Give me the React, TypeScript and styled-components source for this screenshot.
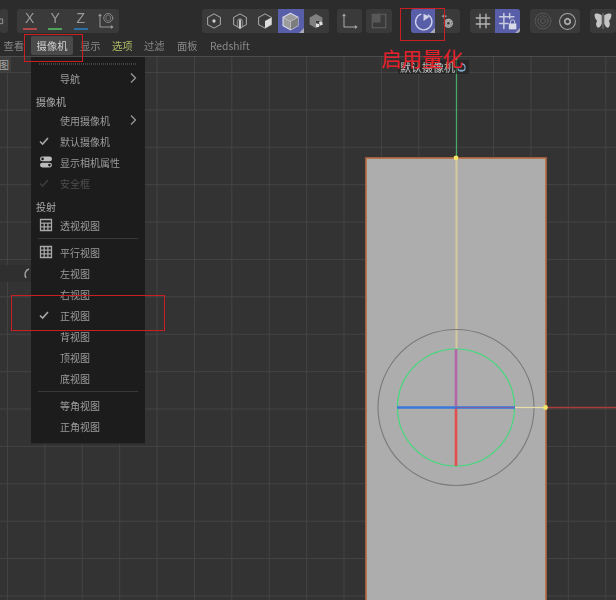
import React from 'react';
import styled, { createGlobalStyle } from 'styled-components';

const FONT = `"Noto Sans CJK SC", "Noto Sans", "Liberation Sans", sans-serif`;

const GlobalStyle = createGlobalStyle`
  html, body {
    margin: 0;
    padding: 0;
    background: #333;
    font-family: ${FONT};
  }
`;

const Page = styled.div`
  position: relative;
  width: 616px;
  height: 600px;
  overflow: hidden;
  display: flex;
  flex-direction: column;
`;

/* top toolbar */
const Toolbar = styled.div`
  height: 34px;
  flex: none;
  box-sizing: border-box;
  padding-top: 9px;
  background: #2c2c2c;
  display: flex;
  align-items: flex-start;
  filter: blur(0.3px);
`;

const ToolGroup = styled.div<{ $gap?: number }>`
  margin-left: ${(p) => p.$gap ?? 0}px;
  height: 24px;
  flex: none;
  display: flex;
  background: #3a3a3a;
  border-radius: 3px;
  overflow: hidden;
`;

const Tool = styled.div<{ $on?: boolean; $w?: number }>`
  position: relative;
  width: ${(p) => p.$w ?? 25}px;
  height: 24px;
  display: flex;
  align-items: center;
  justify-content: center;
  background: ${(p) => (p.$on ? '#585fa8' : 'transparent')};

  ${(p) =>
    p.$on &&
    `&::after {
      content: '';
      position: absolute;
      right: 0;
      bottom: 0;
      border-style: solid;
      border-width: 0 0 5px 5px;
      border-color: transparent transparent #a8a8b8 transparent;
    }`}
`;

const AxisTool = styled.div<{ $color: string }>`
  width: 25.5px;
  height: 24px;
  box-sizing: border-box;
  display: flex;
  flex-direction: column;
  align-items: center;
  color: #9a9a9a;
  font: 14px/19px "Liberation Sans", sans-serif;

  &::after {
    content: '';
    width: 14px;
    height: 2px;
    background: ${(p) => p.$color};
  }
`;

const Ico = styled.svg`
  width: 18px;
  height: 18px;
  fill: none;
  stroke: #a8a8a8;
  stroke-width: 1.4;
  stroke-linejoin: round;
  stroke-linecap: round;
`;

/* menu bar */
const MenuBar = styled.div`
  height: 21px;
  flex: none;
  padding: 0 0 1px 3.5px;
  background: #2c2c2c;
  border-bottom: 1px solid #4c4c4c;
  box-sizing: content-box;
  display: flex;
  align-items: stretch;
  font-size: 10.3px;
  filter: blur(0.3px);
`;

const MenuTitle = styled.div<{ $active?: boolean; $tint?: boolean; $gap?: number }>`
  margin-left: ${(p) => p.$gap ?? 0}px;
  padding: 0 6px;
  margin-top: 2px;
  display: flex;
  align-items: center;
  color: ${(p) => (p.$active ? '#d2d2d2' : p.$tint ? '#b0bb66' : '#8a8a8a')};
  background: ${(p) => (p.$active ? '#4a4a4a' : 'transparent')};
  border-radius: 2px;
`;

const PlainTitle = styled(MenuTitle)`
  padding: 0;
`;

/* viewport */
const Viewport = styled.div`
  position: relative;
  flex: 1;
  background-color: #333333;
  background-image:
    linear-gradient(to right, #434343 1px, transparent 1px),
    linear-gradient(to bottom, #434343 1px, transparent 1px);
  background-size: 37.4px 37.4px;
  background-position: 7px 15px;
`;

const Scene = styled.svg`
  position: absolute;
  inset: 0;
  width: 616px;
  height: 543px;
`;

const PanelTab = styled.div`
  position: absolute;
  left: 0;
  top: 0;
  width: 11px;
  height: 15px;
  background: #3e3e3e;
  color: #a8a8a8;
  font-size: 10px;
  line-height: 15px;
  overflow: hidden;
  text-indent: -1px;
`;

const PanelRow = styled.div`
  position: absolute;
  left: 0;
  top: 208px;
  width: 31px;
  height: 17px;
  background: #2f2f2f;
  display: flex;
  align-items: center;
  justify-content: flex-end;
`;

const CameraLabel = styled.div`
  position: absolute;
  left: 398px;
  top: 3px;
  height: 14px;
  padding: 0 2px;
  display: flex;
  align-items: center;
  gap: 1px;
  background: rgba(30, 30, 30, 0.55);
  color: #c6c6c6;
  font-size: 11px;
  line-height: 14px;
  white-space: nowrap;
  filter: blur(0.4px);
`;

/* camera dropdown */
const Dropdown = styled.div`
  position: absolute;
  left: 31px;
  top: 0;
  width: 114px;
  box-sizing: border-box;
  padding: 6px 0 6px;
  background: #1c1c1c;
  border-bottom: 1px solid #2a2a2a;
  font-size: 10px;
  color: #9c9c9c;
  filter: blur(0.3px);
`;

const Grip = styled.div`
  height: 2px;
  margin: 0 8px 2.5px;
  background-image: repeating-linear-gradient(to right, #424242 0 1px, transparent 1px 2px);
`;

const Row = styled.div<{ $off?: boolean }>`
  height: 21px;
  display: grid;
  grid-template-columns: 29px 1fr 18px;
  align-items: center;
  color: ${(p) => (p.$off ? '#505050' : '#9c9c9c')};
`;

const Slot = styled.div`
  padding-left: 8px;
  display: flex;
  align-items: center;
`;

const Header = styled.div`
  height: 21px;
  box-sizing: border-box;
  padding: 4px 0 0 5px;
  line-height: 17px;
  color: #acacac;
`;

const Divider = styled.div`
  height: 6px;
  box-sizing: border-box;
  margin: 0 7px;
  padding-top: 2px;

  &::before {
    content: '';
    display: block;
    height: 1px;
    background: #383838;
  }
`;

const MiniIcon = styled.svg`
  width: 14px;
  height: 14px;
  fill: none;
  stroke: #a8a8a8;
  stroke-width: 1.3;
  display: block;
`;

/* annotations laid over the screenshot */
const Mark = styled.div<{ $l: number; $t: number; $w: number; $h: number }>`
  position: absolute;
  left: ${(p) => p.$l}px;
  top: ${(p) => p.$t}px;
  width: ${(p) => p.$w}px;
  height: ${(p) => p.$h}px;
  box-sizing: border-box;
  border: 1px solid #c81e24;
  pointer-events: none;
`;

const MarkText = styled.div`
  position: absolute;
  left: 381px;
  top: 44px;
  color: #e3222c;
  font-size: 20.5px;
  font-weight: 400;
  line-height: 28px;
  white-space: nowrap;
`;

const Check = ({ dim }: { dim?: boolean }) => (
  <MiniIcon viewBox="0 0 14 14" style={dim ? { stroke: '#3c3c3c' } : undefined}>
    <path d="M1 7.5 L3.6 10 L9 4" strokeWidth="1.6" />
  </MiniIcon>
);

const Chevron = () => (
  <MiniIcon viewBox="0 0 14 14" style={{ stroke: '#989898' }}>
    <path d="M4 2.5 L8.5 7 L4 11.5" />
  </MiniIcon>
);

const GridIcon = () => (
  <MiniIcon viewBox="0 0 14 14">
    <path d="M1.5 1.5h11v11h-11z M1.5 5.2h11 M1.5 8.9h11 M5.2 5.2v7.3 M8.9 5.2v7.3" />
  </MiniIcon>
);

const FullGridIcon = () => (
  <MiniIcon viewBox="0 0 14 14">
    <path d="M1.5 1.5h11v11h-11z M1.5 5.2h11 M1.5 8.9h11 M5.2 1.5v11 M8.9 1.5v11" />
  </MiniIcon>
);

const ToggleIcon = () => (
  <MiniIcon viewBox="0 0 14 14" style={{ stroke: 'none' }}>
    <rect x="1" y="1.5" width="12" height="4.8" rx="2.4" fill="#bcbcbc" />
    <rect x="1" y="7.7" width="12" height="4.8" rx="2.4" fill="#bcbcbc" />
    <circle cx="3.6" cy="3.9" r="1.3" fill="#1c1c1c" />
    <circle cx="10.4" cy="10.1" r="1.3" fill="#1c1c1c" />
  </MiniIcon>
);

const HEX = 'M12 2.5 L20.5 7.2 V16.8 L12 21.5 L3.5 16.8 V7.2 Z';

const HexDot = () => (
  <Ico viewBox="0 0 24 24">
    <path d={HEX} />
    <circle cx="12" cy="12" r="2.2" fill="#d0d0d0" stroke="none" />
  </Ico>
);
const HexEdge = () => (
  <Ico viewBox="0 0 24 24">
    <path d={HEX} />
    <path d="M12 11v10" strokeWidth="3" stroke="#c8c8c8" />
    <path d="M8.5 20V12.5a3.5 3.5 0 0 1 7 0V20" strokeWidth="0.9" />
  </Ico>
);
const HexFace = () => (
  <Ico viewBox="0 0 24 24">
    <path d={HEX} />
    <path d="M12 12 L20.5 7.2 V16.8 L12 21.5 Z" fill="#dcdcdc" stroke="none" />
  </Ico>
);
const HexSolid = () => (
  <Ico viewBox="0 0 24 24" style={{ width: 21, height: 21, stroke: '#d4d6ea' }}>
    <path d={HEX} fill="#9c9c9c" />
    <path d="M12 12 L20.5 7.2 V16.8 L12 21.5 Z" fill="#7c7c7c" stroke="none" />
    <path d="M3.5 7.2 L12 12 L20.5 7.2 M12 12 V21.5" stroke="#d4d6ea" strokeWidth="0.6" />
  </Ico>
);
const HexMixed = () => (
  <Ico viewBox="0 0 24 24" style={{ stroke: 'none' }}>
    <path d={HEX} fill="#808080" />
    <rect x="12" y="12" width="5" height="5" fill="#3a3a3a" />
    <path d="M16 13l4 0 1 4-4 1z" fill="#e0e0e0" />
    <path d="M12 15l4 1 0 4-4 0z" fill="#e0e0e0" />
  </Ico>
);
const AxisFrame = ({ dim }: { dim?: boolean }) => (
  <Ico viewBox="0 0 24 24" style={dim ? { stroke: '#989898' } : undefined}>
    <path d="M4 3 V20 H21 M2.5 5 L4 3 L5.5 5 M19 18.5 L21 20 L19 21.5" />
    {dim && (
      <>
        <circle cx="15" cy="8" r="6" strokeWidth="1.1" />
        <path d="M15 4 L18 6 V10 L15 12 L12 10 V6 Z" strokeWidth="0.8" />
      </>
    )}
  </Ico>
);
const LayerSquare = () => (
  <Ico viewBox="0 0 24 24" style={{ stroke: '#626262' }}>
    <path d="M3 3h18v18H3z" />
    <path d="M3 3h11v11H3z" fill="#585858" stroke="none" />
  </Ico>
);
const Quantize = () => (
  <Ico viewBox="0 0 24 24" style={{ width: 21, height: 21, stroke: '#d0d2ea' }}>
    <path d="M9 3.6 A9.3 9.3 0 1 0 17.5 4.6" strokeWidth="1.6" />
    <path d="M12 3 L19 6.5 L12 11.5 Z" fill="#d0d2ea" stroke="none" />
  </Ico>
);
const SnapGear = () => (
  <Ico viewBox="0 0 24 24">
    <path d="M7 3v5 M4.5 5.5h5" strokeWidth="1.6" />
    <circle cx="12.5" cy="15" r="3" strokeWidth="2.4" strokeDasharray="2.4 1" />
    <circle cx="12.5" cy="15" r="5.2" strokeWidth="2" strokeDasharray="2.6 1.4" />
  </Ico>
);
const Hash = () => (
  <Ico viewBox="0 0 24 24" style={{ stroke: '#b4b4b4', strokeWidth: 1.8 }}>
    <path d="M8 3v18 M16 3v18 M3 8h18 M3 16h18" />
  </Ico>
);
const HashLock = () => (
  <Ico viewBox="0 0 24 24" style={{ width: 20, height: 20, stroke: '#c8cae0', strokeWidth: 1.8 }}>
    <path d="M7 3v18 M14 3v6 M2 7h17 M2 15h10" />
    <rect x="13" y="15" width="9" height="7" fill="#d8dae8" stroke="none" />
    <path d="M15 15v-2a2.5 2.5 0 0 1 5 0v2" strokeWidth="1.2" />
  </Ico>
);
const Rings = () => (
  <Ico viewBox="0 0 24 24" style={{ width: 20, height: 20, stroke: '#565656', strokeWidth: 1.2 }}>
    <circle cx="12" cy="12" r="9.5" />
    <circle cx="12" cy="12" r="6.2" />
    <circle cx="12" cy="12" r="3" />
  </Ico>
);
const RingGear = () => (
  <Ico viewBox="0 0 24 24" style={{ width: 19, height: 19, stroke: '#a8a8a8' }}>
    <circle cx="12" cy="12" r="10" strokeWidth="1.3" />
    <circle cx="12" cy="12" r="3.4" strokeWidth="2.4" strokeDasharray="2.4 1.2" />
  </Ico>
);
const Butterfly = () => (
  <Ico viewBox="0 0 24 24" style={{ stroke: 'none', width: 20, height: 20 }}>
    <path d="M10.5 5 C7 2.5 2.5 2.5 2 4 C1.5 7 3 10 5 12 C3 14 3.5 19 6 20 C8 20.5 10 17 10.5 15 Z" fill="#c4c4c4" />
    <path d="M13.5 5 C17 2.5 21.5 2.5 22 4 C22.5 7 21 10 19 12 C21 14 20.5 19 18 20 C16 20.5 14 17 13.5 15 Z" fill="#c4c4c4" />
    <path d="M12 3v18" stroke="#a0a0a0" strokeWidth="0.8" />
  </Ico>
);

type Entry =
  | { kind: 'header'; label: string }
  | { kind: 'divider' }
  | { kind: 'item'; label: string; lead?: React.ReactNode; more?: boolean; off?: boolean };

const ENTRIES: Entry[] = [
  { kind: 'item', label: '导航', more: true },
  { kind: 'header', label: '摄像机' },
  { kind: 'item', label: '使用摄像机', more: true },
  { kind: 'item', label: '默认摄像机', lead: <Check /> },
  { kind: 'item', label: '显示相机属性', lead: <ToggleIcon /> },
  { kind: 'item', label: '安全框', lead: <Check dim />, off: true },
  { kind: 'header', label: '投射' },
  { kind: 'item', label: '透视视图', lead: <GridIcon /> },
  { kind: 'divider' },
  { kind: 'item', label: '平行视图', lead: <FullGridIcon /> },
  { kind: 'item', label: '左视图' },
  { kind: 'item', label: '右视图' },
  { kind: 'item', label: '正视图', lead: <Check /> },
  { kind: 'item', label: '背视图' },
  { kind: 'item', label: '顶视图' },
  { kind: 'item', label: '底视图' },
  { kind: 'divider' },
  { kind: 'item', label: '等角视图' },
  { kind: 'item', label: '正角视图' },
];

const CameraMenu = () => (
  <Dropdown>
    <Grip />
    {ENTRIES.map((e, i) => {
      if (e.kind === 'header') return <Header key={i}>{e.label}</Header>;
      if (e.kind === 'divider') return <Divider key={i} />;
      return (
        <Row key={i} $off={e.off}>
          <Slot>{e.lead}</Slot>
          <span>{e.label}</span>
          {e.more ? <Chevron /> : <span />}
        </Row>
      );
    })}
  </Dropdown>
);

// the plane and the axis gizmo, in page coordinates
const SceneDrawing = () => (
  <Scene viewBox="0 57 616 543">
    <rect x="366" y="158" width="180" height="460" fill="#adadad" stroke="#b86a3c" strokeWidth="1.6" />
    <path d="M456.5 57 V158" stroke="#46a968" strokeWidth="1.2" />
    <path d="M456.5 158 V349" stroke="#d4ca9c" strokeWidth="2" />
    <circle cx="456" cy="407.5" r="78" fill="none" stroke="#7a7a7a" strokeWidth="1.1" />
    <circle cx="456" cy="407.5" r="58.5" fill="none" stroke="#3ddc78" strokeWidth="1.1" />
    <path d="M456 349 V407" stroke="#b068a8" strokeWidth="2.6" />
    <path d="M456 407 V466" stroke="#e2504e" strokeWidth="2.6" />
    <path d="M397 407.5 H515" stroke="#3a78dc" strokeWidth="2.6" />
    <path d="M456 407.5 H515" stroke="#8a5a9c" strokeWidth="0.8" />
    <path d="M515 407.5 H545" stroke="#e8dfa8" strokeWidth="1.2" />
    <path d="M547 407.5 H616" stroke="#a83c3c" strokeWidth="1.5" />
    <circle cx="456" cy="158" r="2.4" fill="#f4e468" />
    <circle cx="545.5" cy="407.5" r="2.4" fill="#f4e468" />
  </Scene>
);

export default function App() {
  return (
    <Page>
      <GlobalStyle />
      <Toolbar>
        <ToolGroup>
          <Tool $w={8}>
            <Ico viewBox="0 0 24 24" style={{ width: 8 }}>
              <path d="M0 6h8v14H0z" strokeWidth="2.4" />
            </Ico>
          </Tool>
        </ToolGroup>
        <ToolGroup $gap={9}>
          <AxisTool $color="#b04a4a">X</AxisTool>
          <AxisTool $color="#4fa35c">Y</AxisTool>
          <AxisTool $color="#2f6fa8">Z</AxisTool>
          <Tool $w={25}>
            <AxisFrame dim />
          </Tool>
        </ToolGroup>
        <ToolGroup $gap={83}>
          <Tool $w={25.5}><HexDot /></Tool>
          <Tool $w={25.5}><HexEdge /></Tool>
          <Tool $w={25.5}><HexFace /></Tool>
          <Tool $w={25.5} $on><HexSolid /></Tool>
          <Tool $w={25.5}><HexMixed /></Tool>
        </ToolGroup>
        <ToolGroup $gap={8}>
          <Tool><AxisFrame /></Tool>
        </ToolGroup>
        <ToolGroup $gap={4}>
          <Tool $w={26}><LayerSquare /></Tool>
        </ToolGroup>
        <ToolGroup $gap={19}>
          <Tool $w={24} $on><Quantize /></Tool>
          <Tool><SnapGear /></Tool>
        </ToolGroup>
        <ToolGroup $gap={10}>
          <Tool><Hash /></Tool>
          <Tool $on><HashLock /></Tool>
        </ToolGroup>
        <ToolGroup $gap={10}>
          <Tool><Rings /></Tool>
          <Tool><RingGear /></Tool>
        </ToolGroup>
        <ToolGroup $gap={10}>
          <Tool $w={26}><Butterfly /></Tool>
        </ToolGroup>
      </Toolbar>

      <MenuBar>
        <PlainTitle>查看</PlainTitle>
        <MenuTitle $active $gap={6.5}>摄像机</MenuTitle>
        <PlainTitle $gap={6.5}>显示</PlainTitle>
        <PlainTitle $gap={11.4} $tint>选项</PlainTitle>
        <PlainTitle $gap={11.4}>过滤</PlainTitle>
        <PlainTitle $gap={12.4}>面板</PlainTitle>
        <PlainTitle $gap={12.4}>Redshift</PlainTitle>
      </MenuBar>

      <Viewport>
        <SceneDrawing />
        <PanelTab>图</PanelTab>
        <PanelRow>
          <svg width="8" height="12" viewBox="0 0 8 12" fill="none" stroke="#a8a8a8" strokeWidth="1.3">
            <path d="M6 1 C2 2 1 7 3 10" />
          </svg>
        </PanelRow>
        <CameraLabel>
          默认摄像机
          <svg width="11" height="11" viewBox="0 0 12 12" fill="none" stroke="#7fa8c8" strokeWidth="1.3">
            <path d="M2 7 A4 4 0 1 0 6 2 M2 9 H10" />
          </svg>
        </CameraLabel>
        <CameraMenu />
      </Viewport>

      <Mark $l={24} $t={34} $w={59} $h={28} />
      <Mark $l={400} $t={8} $w={45} $h={33} />
      <Mark $l={11} $t={295} $w={154} $h={36} />
      <MarkText>启用量化</MarkText>
    </Page>
  );
}
